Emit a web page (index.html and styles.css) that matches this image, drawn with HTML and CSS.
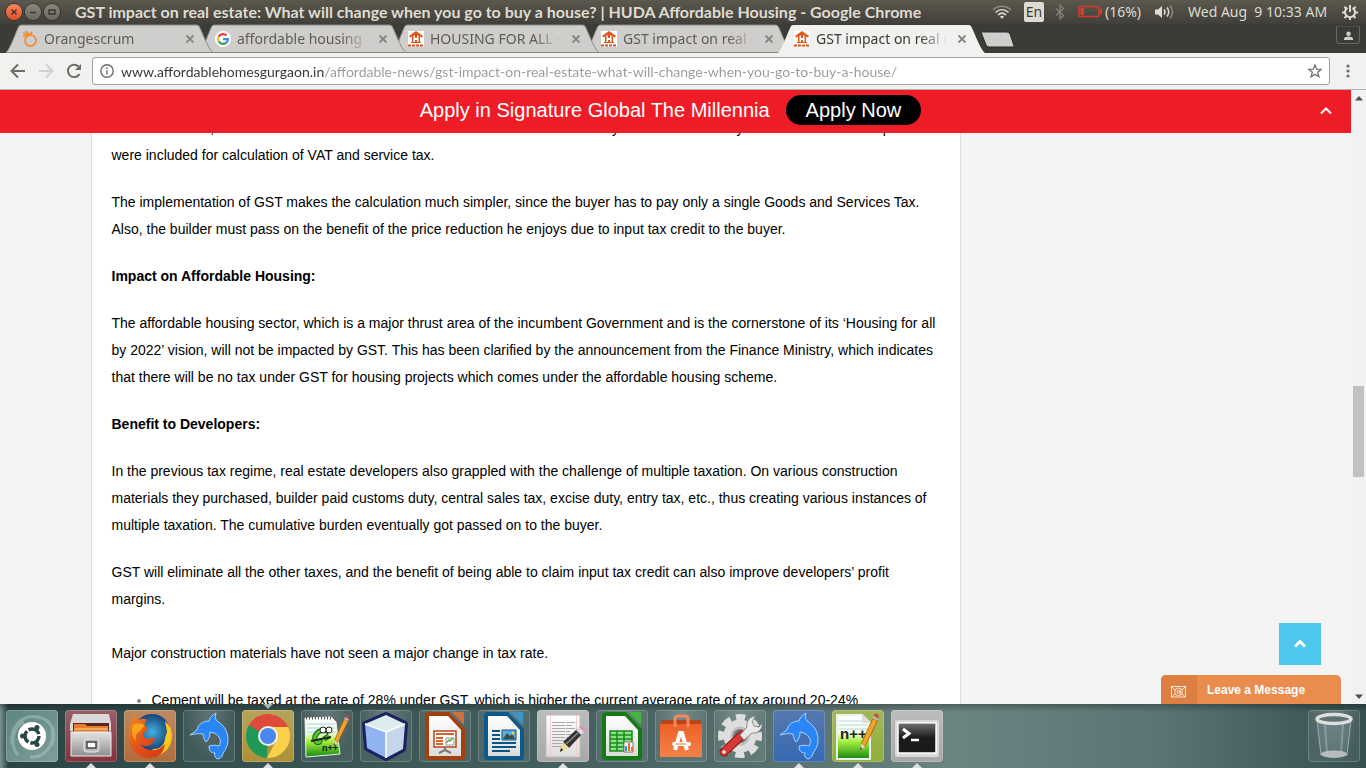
FILE: index.html
```html
<!DOCTYPE html>
<html lang="en">
<head>
<meta charset="utf-8">
<title>GST impact on real estate</title>
<link rel="stylesheet" href="styles.css">
</head>
<body>
<svg class="defs" aria-hidden="true">
  <defs>
    <linearGradient id="gloss" x1="0" y1="0" x2="0" y2="1"><stop offset="0" stop-color="#fff" stop-opacity=".35"/><stop offset="1" stop-color="#fff" stop-opacity="0"/></linearGradient>
    <linearGradient id="paper" x1="0" y1="0" x2="0" y2="1"><stop offset="0" stop-color="#fff"/><stop offset="1" stop-color="#dcdcdc"/></linearGradient>
    <linearGradient id="meadow" x1="0" y1="0" x2="0" y2="1"><stop offset="0" stop-color="#fff"/><stop offset=".4" stop-color="#f0ffe8"/><stop offset=".6" stop-color="#a8f040"/><stop offset="1" stop-color="#128a10"/></linearGradient>
    <linearGradient id="steel" x1="0" y1="0" x2="0" y2="1"><stop offset="0" stop-color="#e4e4e4"/><stop offset="1" stop-color="#8d8d8d"/></linearGradient>
    <linearGradient id="flame" x1="0" y1="0" x2="1" y2="1"><stop offset="0" stop-color="#f38b1d"/><stop offset=".5" stop-color="#e2501b"/><stop offset="1" stop-color="#d03a12"/></linearGradient>
    <linearGradient id="bag" x1="0" y1="0" x2="0" y2="1"><stop offset="0" stop-color="#ee6128"/><stop offset="1" stop-color="#f58249"/></linearGradient>
    <radialGradient id="globe"><stop offset="0" stop-color="#43b2e0"/><stop offset="1" stop-color="#164479"/></radialGradient>
    <symbol id="huda" viewBox="0 0 16 16"><path fill="#fff" d="M0 0h16v16H0z"/><path fill="#e0571c" d="M8 0l7 5-1 1.500-2-1V11h1v1H3v-1h1V5.500l-2 1L1 5zM5.500 4.500V11H7V9h2v2h1.500V4.500H9V7H7V4.500z"/><path stroke="#d8501c" stroke-width="2" stroke-dasharray="3 1" d="M0 14.500h16"/></symbol>
    <symbol id="close" viewBox="0 0 10 10"><path d="M1.500 1.500l7 7M8.500 1.500l-7 7" fill="none" stroke="currentColor" stroke-width="1.800"/></symbol>
    <symbol id="chevron" viewBox="0 0 14 10"><path d="M2 7.500l5-5 5 5" fill="none" stroke="currentColor"/></symbol>
    <symbol id="dolphin" viewBox="0 0 52 52"><path fill="#2a86f5" stroke="#a9d3ff" stroke-width="1" stroke-linejoin="round" d="M7 25c2-2 5-3 7-5 1-5 5-9 12-9 1-3 3-6 7-8-1 3-1 6 1 8 7 4 11 11 11 18 0 5-1 9-5 14 0 3-2 5-5 6-3-1-4-3-3-6-4 0-6-2-6-7 4-1 7-1 10 0 3-5 1-10-5-13l-4-1c0 4-1 7-4 10-2-2-2-5-3-8-4-1-9 0-13 1z"/></symbol>
    <symbol id="pencil" viewBox="0 0 24 44"><path fill="#f0a42c" stroke="#a8650b" d="M16 8l5 2L8 37l-4-3z"/><path fill="#ecd0a8" d="M4 34l4 3-5 5z"/><path fill="#333" d="M3 38l2 1-2 3z"/><path fill="#b8bcc0" d="M16 8l1-3 5 3-1 2z"/><path fill="#c94844" d="M17 5c0-3 6-4 5 3z"/></symbol>
  </defs>
</svg>

<header class="menubar">
  <div class="winbtns">
    <button class="winbtn winbtn-close" aria-label="Close"><svg viewBox="0 0 16 16"><path d="M5.500 5.500l5 5M10.500 5.500l-5 5"/></svg></button>
    <button class="winbtn" aria-label="Minimize"><svg viewBox="0 0 16 16"><path d="M5 8.500h6"/></svg></button>
    <button class="winbtn" aria-label="Restore"><svg viewBox="0 0 16 16"><path d="M5 6h6v4H5z"/></svg></button>
  </div>
  <h1 class="wintitle">GST impact on real estate: What will change when you go to buy a house? | HUDA Affordable Housing - Google Chrome</h1>
  <div class="status">
    <svg class="wifi" viewBox="0 0 20 16" fill="none" stroke-width="1.600"><path stroke="#8b8983" d="M1 6c5-5 13-5 18 0"/><path stroke="#dfdbd2" d="M3.500 8.500c4-3.700 9-3.700 13 0M6 11c2.500-2.300 5.500-2.300 8 0"/><path fill="#dfdbd2" d="M8 12.500c1.300-1 2.700-1 4 0l-2 2.500z"/></svg>
    <span class="lang">En</span>
    <svg class="bt" viewBox="0 0 10 16" fill="none" stroke="#85827a" stroke-width="1.300"><path d="M1 4.500l7.500 7L5 15V1l3.500 3.500L1 11.500"/></svg>
    <svg class="batt" viewBox="0 0 24 14"><rect x="1" y="1.500" width="20" height="10" rx="1" fill="none" stroke="#df382c" stroke-width="1.500"/><path fill="#df382c" d="M2.500 3h3.500v7H2.500zM22 4h2v5h-2z"/></svg>
    <span class="charge">(16%)</span>
    <svg class="vol" viewBox="0 0 20 16" fill="none" stroke-width="1.500"><path fill="#dfdbd2" d="M0 5.500h3L7 2v12l-4-3.500H0z"/><path stroke="#dfdbd2" d="M9 5.500q2 2.500 0 5M12 3.500q3.500 4.500 0 9"/><path stroke="#8b8983" d="M15 1.500q5 6.500 0 13"/></svg>
    <span class="clock">Wed Aug&nbsp; 9 10:33 AM</span>
    <svg class="gear" viewBox="0 0 16 16" fill="none" stroke="#dfdbd2"><path stroke-width="2" d="M5.500 3.800a5 5 0 1 0 5 0M8 1v7"/><path stroke-width="2" d="M2.300 2.800l2 2M13.700 2.800l-2 2M0 8.500h3M13 8.500h3M2.500 14l2-2M13.500 14l-2-2M8 13v3"/></svg>
  </div>
</header>

<nav class="tabstrip" aria-label="Tabs">
  <div class="tab t1">
    <svg class="tab-shape" viewBox="0 0 208 29" preserveAspectRatio="none"><path d="M0 28.500C3 27 9 11 12 4q1-3 3-3h176q2 0 3 3c4 9 9 22 13 24.500z"/></svg>
    <svg class="fav" viewBox="0 0 16 16" fill="none" stroke="#f58a2c" stroke-width="1.700"><circle cx="8.500" cy="9.500" r="5.500"/><path d="M1 2l4 1 3 2M4 0l3 4M1 5l5-1M8 4l2-3"/></svg>
    <button class="tab-title">Orangescrum</button><button class="tab-close" aria-label="Close tab"><svg><use href="#close"/></svg></button>
  </div>
  <div class="tab t2">
    <svg class="tab-shape" viewBox="0 0 208 29" preserveAspectRatio="none"><path d="M0 28.500C3 27 9 11 12 4q1-3 3-3h176q2 0 3 3c4 9 9 22 13 24.500z"/></svg>
    <svg class="fav" viewBox="0 0 16 16" fill="none" stroke-width="2.200"><circle cx="8" cy="8" r="8" fill="#fff"/><path stroke="#ea4335" d="M3.700 5.800a4.900 4.900 0 0 1 7.800-1.400"/><path stroke="#fbbc05" d="M3.700 10.300a4.900 4.900 0 0 1 0-4.500"/><path stroke="#34a853" d="M11.300 11.600a4.900 4.900 0 0 1-7.600-1.300"/><path stroke="#4285f4" d="M8 8.200h4.900q0 2.200-1.600 3.400"/></svg>
    <button class="tab-title">affordable housing</button><button class="tab-close" aria-label="Close tab"><svg><use href="#close"/></svg></button>
  </div>
  <div class="tab t3">
    <svg class="tab-shape" viewBox="0 0 208 29" preserveAspectRatio="none"><path d="M0 28.500C3 27 9 11 12 4q1-3 3-3h176q2 0 3 3c4 9 9 22 13 24.500z"/></svg>
    <svg class="fav"><use href="#huda"/></svg>
    <button class="tab-title">HOUSING FOR ALL -</button><button class="tab-close" aria-label="Close tab"><svg><use href="#close"/></svg></button>
  </div>
  <div class="tab t4">
    <svg class="tab-shape" viewBox="0 0 208 29" preserveAspectRatio="none"><path d="M0 28.500C3 27 9 11 12 4q1-3 3-3h176q2 0 3 3c4 9 9 22 13 24.500z"/></svg>
    <svg class="fav"><use href="#huda"/></svg>
    <button class="tab-title">GST impact on real e</button><button class="tab-close" aria-label="Close tab"><svg><use href="#close"/></svg></button>
  </div>
  <div class="tab active">
    <svg class="tab-shape" viewBox="0 0 208 29" preserveAspectRatio="none"><path d="M0 29C3 27 9 11 12 4q1-3 3-3h176q2 0 3 3c4 9 9 22 13 25z"/></svg>
    <svg class="fav"><use href="#huda"/></svg>
    <button class="tab-title">GST impact on real e</button><button class="tab-close" aria-label="Close tab"><svg><use href="#close"/></svg></button>
  </div>
  <button class="newtab" aria-label="New tab"><svg viewBox="0 0 34 17"><path d="M1 1h26q2 0 3 2l4 12q0 1-1 1H9q-2 0-3-2z"/></svg></button>
  <button class="profile" aria-label="Profile"><svg viewBox="0 0 10 10"><circle cx="5" cy="3" r="2.500"/><path d="M0 10V8q1-2 5-2t5 2v2z"/></svg></button>
</nav>

<div class="toolbar">
  <button class="tool" aria-label="Back"><svg viewBox="0 0 16 16"><path d="M15 8H2M8 1.500L1.500 8 8 14.500"/></svg></button>
  <button class="tool tool-off" aria-label="Forward" disabled><svg viewBox="0 0 16 16"><path d="M1 8h13M8 1.500L14.500 8 8 14.500"/></svg></button>
  <button class="tool" aria-label="Reload"><svg viewBox="0 0 16 16"><path d="M13.500 11A6.200 6.200 0 1 1 12.500 3.500"/><path class="solid" d="M15 1v6H9z"/></svg></button>
  <div class="omnibox">
    <svg class="info" viewBox="0 0 14 14"><circle cx="7" cy="7" r="6.200"/><path d="M7 6.200v4.300M7 3.300v1.700"/></svg>
    <input class="url" type="text" aria-label="Address" value="www.affordablehomesgurgaon.in/affordable-news/gst-impact-on-real-estate-what-will-change-when-you-go-to-buy-a-house/">
    <button class="star" aria-label="Bookmark"><svg viewBox="0 0 14 14"><path d="M7 1l1.700 4.200 4.500.2-3.500 2.900 1.200 4.500L7 10.300l-3.900 2.500 1.200-4.500L.8 5.400l4.500-.2z"/></svg></button>
  </div>
  <button class="more" aria-label="Menu"><svg viewBox="0 0 4 14"><circle cx="2" cy="2" r="1.600"/><circle cx="2" cy="7" r="1.600"/><circle cx="2" cy="12" r="1.600"/></svg></button>
</div>

<div class="viewport">
  <main class="page">
    <div class="banner">
      <span>Apply in Signature Global The Millennia</span>
      <a class="apply" href="#apply">Apply Now</a>
      <button class="collapse" aria-label="Collapse"><svg><use href="#chevron"/></svg></button>
    </div>
    <div class="container">
      <article class="article">
        <p>In certain states, however the value of the land is excluded and the tax is due only on the sum actually stated while in others parts<br>were included for calculation of VAT and service tax.</p>
        <p>The implementation of GST makes the calculation much simpler, since the buyer has to pay only a single Goods and Services Tax. Also, the builder must pass on the benefit of the price reduction he enjoys due to input tax credit to the buyer.</p>
        <h2>Impact on Affordable Housing:</h2>
        <p>The affordable housing sector, which is a major thrust area of the incumbent Government and is the cornerstone of its ‘Housing for all by 2022’ vision, will not be impacted by GST. This has been clarified by the announcement from the Finance Ministry, which indicates that there will be no tax under GST for housing projects which comes under the affordable housing scheme.</p>
        <h2>Benefit to Developers:</h2>
        <p>In the previous tax regime, real estate developers also grappled with the challenge of multiple taxation. On various construction materials they purchased, builder paid customs duty, central sales tax, excise duty, entry tax, etc., thus creating various instances of multiple taxation. The cumulative burden eventually got passed on to the buyer.</p>
        <p>GST will eliminate all the other taxes, and the benefit of being able to claim input tax credit can also improve developers’ profit margins.<br><br>Major construction materials have not seen a major change in tax rate.</p>
        <ul><li>Cement will be taxed at the rate of 28% under GST, which is higher the current average rate of tax around 20-24%</li></ul>
      </article>
    </div>
    <button class="totop" aria-label="Back to top"><svg><use href="#chevron"/></svg></button>
    <button class="chat">
      <span class="chat-icon"><svg viewBox="0 0 15 12" fill="none" stroke="#fff" stroke-width=".8"><path d="M.5.500h14v10.500H.5zM.5.500L4 4M14.500.500L11 4M.5 11L4 8M14.500 11L11 8"/><circle cx="7.500" cy="5.800" r="3.800"/><circle cx="7.500" cy="5.800" r="1.500"/><path d="M9 4v3l2 .5"/></svg></span>
      <span class="chat-text">Leave a Message</span>
    </button>
  </main>
  <div class="scrollbar" aria-hidden="true">
    <svg viewBox="0 0 8 5"><path d="M4 0l4 4.500H0z"/></svg>
    <div class="thumb"></div>
    <svg viewBox="0 0 8 5"><path d="M0 .5h8L4 5z"/></svg>
  </div>
</div>

<footer class="dock">
  <button class="app dash" aria-label="Dash"><svg viewBox="0 0 52 52"><path fill="none" stroke="#c8dcda" stroke-opacity=".35" stroke-width="3" d="M6 34C4 16 16 4 32 7s18 18 14 28M46 20c4 16-9 28-22 27M12 45C4 36 5 18 18 12"/><circle cx="26" cy="26" r="14" fill="#fff"/><circle cx="26" cy="26" r="7" fill="none" stroke="#2c4645" stroke-width="3.500" stroke-dasharray="12.600 2"/><g fill="#2c4645"><circle cx="16.500" cy="26" r="2.500"/><circle cx="31" cy="17.500" r="2.500"/><circle cx="31" cy="34.500" r="2.500"/></g></svg></button>
  <button class="app files run" aria-label="Files"><svg viewBox="0 0 52 52"><path fill="#d9d9d9" d="M8 4h36l2 10v7H5v-7z"/><path fill="#5a2720" d="M8 13h36v9H8z"/><path fill="#e57e2c" d="M9 14h11l2 2h21v7H9z"/><path stroke="#ffd29a" d="M9 19h34"/><path fill="url(#steel)" stroke="#ededed" d="M6 22h40v24H6z"/><rect x="19" y="29" width="15" height="13" rx="3" fill="#b9b9b9" stroke="#e6e6e6"/><rect x="22" y="32" width="9" height="6" fill="#fff" stroke="#444" stroke-width="1.500"/></svg></button>
  <button class="app firefox run" aria-label="Firefox"><svg viewBox="0 0 52 52"><circle cx="28" cy="22" r="18" fill="url(#globe)"/><path fill="#fcc81e" d="M41 11c7 6 9 15 5 24-4 8-12 12-20 12l3-8c8 0 12-5 12-11l2-6z"/><path fill="url(#flame)" d="M8 12c0-4 1-6 3-8 0 4 2 5 4 6 3-2 6-1 8 0-2 2-2 4-3 6l4 2c0 2-2 4-5 5 0 6 5 7 9 5 3-1 4 1 2 3-4 6-10 7-14 2 5 9 17 10 25 1-1 9-7 14-16 14C13 48 2 38 5 21c0-4 1-7 3-9z"/><path fill="#f9a51a" d="M9 15c4-2 9-2 12 1-4 2-3 4-5 5-4 2-5 6-4 10-4-4-5-10-3-16z"/></svg></button>
  <button class="app" aria-label="MySQL Workbench"><svg><use href="#dolphin"/></svg></button>
  <button class="app chrome run topmark" aria-label="Chrome"><svg viewBox="0 0 52 52"><path fill="#df4a3c" d="M26 26L7 15a22 22 0 0 1 39 2z"/><path fill="#209957" d="M26 26l-1 22A22 22 0 0 1 7 15z"/><path fill="#fdd04c" d="M26 17h20a22 22 0 0 1-21 31l9-17z"/><path fill="#df4a3c" d="M7 15a22 22 0 0 1 39 2H26l-8 5z"/><circle cx="26" cy="26" r="10" fill="#f2f2f2"/><circle cx="26" cy="26" r="8" fill="#4a87ee"/></svg></button>
  <button class="app" aria-label="Notepadqq"><svg viewBox="0 0 52 52"><path fill="url(#meadow)" stroke="#eee" d="M4 8l26-1 5 5 4 32-34 3z"/><path stroke="#a8cde8" d="M6 14h28M6 18h28M6 22h30"/><path stroke="#555" stroke-width="3" stroke-dasharray="1 2" d="M5 8h25"/><path fill="none" stroke="#165f12" stroke-width="5" d="M28 22c-12-5-15 5-14 8s6 4 5-1M23 29l5-3"/><path fill="none" stroke="#56c632" stroke-width="3" d="M28 22c-12-5-15 5-14 8s6 4 5-1M23 29l5-3"/><circle cx="22" cy="20" r="3" fill="#fff" stroke="#222"/><circle cx="28" cy="20" r="3" fill="#fff" stroke="#222"/><path stroke="#222" stroke-width="2" d="M10 31l20-4"/><text class="npp-small" x="21" y="41">n++</text><use href="#pencil" x="30" y="3" width="20" height="35"/></svg></button>
  <button class="app" aria-label="NetBeans"><svg viewBox="0 0 52 52"><path fill="#1c2260" stroke="#1c2260" stroke-width="6" stroke-linejoin="round" d="M26 5l19 9-2 25-17 9L7 38 5 14z"/><path fill="#d9edec" d="M26 5l19 9-19 8L5 14z"/><path fill="#8fb4f1" d="M5 14l21 8v26L7 38z"/><path fill="#c4d6e8" d="M45 14l-19 8v26l17-9z"/><path fill="none" stroke="#fff" stroke-width="1.500" d="M5 14l21 8 19-8M26 22v26"/></svg></button>
  <button class="app impress" aria-label="Impress"><svg viewBox="0 0 52 52"><path class="lo" d="M10 2h20l16 17v28q0 3-3 3H10q-4 0-4-4V6q0-4 4-4z"/><path class="lo-corner" d="M33 2h12v13z"/><path fill="url(#paper)" d="M10 6h19l13 14v26H10z"/><path fill="#fff" stroke="#b7471f" stroke-width="1.500" d="M15 21h22v16H15z"/><path fill="none" stroke="#d8622c" stroke-width="2" d="M17 24h18M17 28h7M17 31h7M17 34h7"/><path fill="none" stroke="#777" stroke-width="2" d="M26 37v3l-6 3M26 40l6 3"/><path fill="none" stroke="#4caf3b" stroke-width="1.500" d="M27 33l3-3 1 1 3-3"/><path fill="none" stroke="#999" d="M27 28h8v7h-8z"/></svg></button>
  <button class="app writer" aria-label="Writer"><svg viewBox="0 0 52 52"><path class="lo" d="M10 2h20l16 17v28q0 3-3 3H10q-4 0-4-4V6q0-4 4-4z"/><path class="lo-corner" d="M33 2h12v13z"/><path fill="url(#paper)" d="M10 6h19l13 14v26H10z"/><path stroke="#085688" stroke-width="2" d="M14 21h8M14 25h8M14 29h8M14 33h24M14 37h24M14 41h18"/><path fill="#5daadd" stroke="#085688" d="M24 20h14v10H24z"/><path fill="#3b4b45" d="M25 29l4-6 3 3 2-2 3 5z"/><circle cx="35" cy="23" r="1.500" fill="#ffc83d"/></svg></button>
  <button class="app gedit run" aria-label="Text Editor"><svg viewBox="0 0 52 52"><path fill="url(#paper)" stroke="#bbb" d="M9 5h34v42H9z"/><path stroke="#aaa" stroke-dasharray="13 1 9 2" d="M15 12.500h24M15 15.500h20M15 18.500h23M15 21.500h18M15 24.500h22M15 27.500h24M15 30.500h16M15 33.500h18M15 36.500h14"/><path stroke="#f3cccc" d="M13.500 5v42M39.500 5v42"/><path fill="#333" d="M26 32l14-13 5 5-13 14z"/><path fill="#f1dc98" d="M26 32l6 6-9 4z"/><path fill="#111" d="M24 38l2 2-3 2z"/><path fill="#ddd" d="M39 20l3-3 5 5-3 3z"/><path fill="#dc8fc0" d="M42 17q3-2 5 1t0 4z"/><path stroke="#888" stroke-width="1.500" d="M29 34l13-12"/></svg></button>
  <button class="app calc" aria-label="Calc"><svg viewBox="0 0 52 52"><path class="lo" d="M10 2h20l16 17v28q0 3-3 3H10q-4 0-4-4V6q0-4 4-4z"/><path class="lo-corner" d="M33 2h12v13z"/><path fill="url(#paper)" d="M10 6h19l13 14v26H10z"/><path fill="#8ee08c" stroke="#188b17" stroke-width="1.500" d="M14 21h22v20H14zM14 25h22M14 29h22M14 33h22M14 37h22M21 21v20M28 21v20"/><path fill="#fff" stroke="#777" d="M28 32h9v10h-9z"/><path stroke="#1a9bdf" stroke-width="2" d="M30 41v-5"/><path stroke="#ef6a24" stroke-width="2" d="M33 41v-8M36 41v-4"/></svg></button>
  <button class="app" aria-label="Ubuntu Software"><svg viewBox="0 0 52 52"><path fill="#b9451d" d="M7 10h38l2 5H5z"/><path fill="url(#bag)" d="M5 14h42v33H5z"/><path fill="none" stroke="#f08a64" stroke-width="3" d="M20 17V9q0-3 3-3h7q3 0 3 3v8"/><path fill="none" stroke="#fff" stroke-width="4" d="M20 40l5-17h2l5 17"/><path stroke="#fff" stroke-width="4" stroke-linecap="round" d="M19 34h15"/><path stroke="#f07030" d="M21 34h10"/></svg></button>
  <button class="app" aria-label="System Settings"><svg viewBox="0 0 52 52"><circle cx="26" cy="26" r="18.500" fill="none" stroke="#dedede" stroke-width="7" stroke-dasharray="9 5.530" stroke-dashoffset="4.500"/><circle cx="26" cy="26" r="13" fill="#bdbdbd" stroke="#dedede" stroke-width="7"/><circle cx="26" cy="26" r="7" fill="#777"/><path stroke="#7d1512" stroke-width="9" stroke-linecap="round" d="M10 42l18-17"/><path stroke="#d83934" stroke-width="7" stroke-linecap="round" d="M10 42l18-17"/><path fill="#e9e9e9" stroke="#777" stroke-width=".8" d="M26 25l7-8c-1-6 3-11 9-11l-4 5 2 5 5 1 3-4c1 6-4 11-10 10l-8 7z"/><circle cx="10" cy="42" r="1.800" fill="#eee"/></svg></button>
  <button class="app blue run" aria-label="MySQL Workbench window"><svg><use href="#dolphin"/></svg></button>
  <button class="app green run" aria-label="Notepadqq window"><svg viewBox="0 0 52 52"><path fill="url(#meadow)" stroke="#eee" stroke-width="2" d="M5 5h25l8 8v36H5z"/><path stroke="#bbd4e0" d="M7 11h23M7 15h29M7 19h29"/><path fill="#ddd" d="M30 4v9h8z"/><text class="npp" x="8" y="29">n++</text><use href="#pencil" x="25" y="1" width="24" height="42"/></svg></button>
  <button class="app grey run" aria-label="Terminal"><svg viewBox="0 0 52 52"><rect x="4" y="10" width="44" height="37" rx="2" fill="#d9d9d9"/><path fill="#1b1b1b" stroke="#fff" stroke-width="1.500" d="M7 13h38v30H7z"/><path fill="url(#gloss)" d="M8 14h36v14H8z"/><path fill="none" stroke="#fff" stroke-width="3" d="M12 19l6 4.500-6 4.500"/><path stroke="#fff" stroke-width="2.500" d="M20 30h8"/></svg></button>
  <button class="app trash" aria-label="Trash"><svg viewBox="0 0 52 52"><path fill="#bcd" fill-opacity=".16" stroke="#9cadad" stroke-width="1" d="M9 10l4 35q13 5 26 0l4-35z"/><ellipse cx="26" cy="44" rx="13" ry="3.500" fill="#ccc" fill-opacity=".8"/><ellipse cx="26" cy="9" rx="17" ry="4.500" fill="#5d7271" stroke="#dedede" stroke-width="3.500"/><path stroke="#c8d4d4" stroke-opacity=".35" stroke-width="2" d="M17 14l2 29M35 14l-2 29"/></svg></button>
</footer>
</body>
</html>
```
FILE: styles.css
```css
* { box-sizing: border-box; }
html, body { height: 100%; }
body {
  margin: 0;
  display: flex;
  flex-direction: column;
  overflow: hidden;
  font-family: "Liberation Sans", Arial, sans-serif;
}
button { border: 0; padding: 0; margin: 0; background: none; font: inherit; color: inherit; }
svg { display: block; flex: none; }
.defs { position: absolute; width: 0; height: 0; }

/* desktop menu bar */
.menubar {
  flex: none;
  height: 24px;
  display: flex;
  align-items: center;
  padding: 0 8px 0 6px;
  background: linear-gradient(#5b584d, #403f3a);
  color: #dfdbd2;
  font-family: "Noto Sans", sans-serif;
  font-size: 14px;
  white-space: nowrap;
}
.winbtns { display: flex; gap: 3px; margin-right: 15px; }
.winbtn {
  width: 16px;
  height: 16px;
  border-radius: 50%;
  background: linear-gradient(#8a877e, #6b6861);
  box-shadow: 0 0 0 1px #35342f;
}
.winbtn svg { width: 16px; height: 16px; fill: none; stroke: #35342f; stroke-width: 1.3; }
.winbtn-close { background: linear-gradient(#f58562, #e3501f); }
.wintitle { margin: 0; flex: 1; font-family: Lato, sans-serif; font-size: 16px; font-weight: 700; line-height: 24px; }
.status { display: flex; align-items: center; line-height: 24px; }
.wifi { width: 20px; height: 16px; margin-right: 12px; }
.lang {
  width: 20px;
  height: 20px;
  margin-right: 11px;
  border-radius: 2px;
  background: #dfdbd2;
  color: #3c3b37;
  line-height: 20px;
  text-align: center;
}
.bt { width: 10px; height: 16px; margin-right: 13px; }
.batt { width: 24px; height: 14px; margin-right: 3px; }
.charge { width: 50px; }
.vol { width: 20px; height: 16px; margin-right: 13px; }
.clock { width: 154px; }
.gear { width: 16px; height: 16px; }

/* tab strip */
.tabstrip {
  flex: none;
  height: 29px;
  display: flex;
  padding: 0 6px;
  background: #3c3b37;
}
.tab {
  position: relative;
  flex: 0 1 208px;
  min-width: 0;
  display: flex;
  align-items: center;
  margin-right: -15px;
  padding: 0 19px 0 16px;
  color: #5e5c58;
}
.t1 { z-index: 4; }
.t2 { z-index: 3; }
.t3 { z-index: 2; }
.t4 { z-index: 1; }
.active { z-index: 5; color: #3b3a37; }
.tab-shape { position: absolute; inset: 0; width: 100%; height: 100%; fill: #d0cecc; stroke: #8d8b88; stroke-width: 1; }
.active .tab-shape { fill: #f2f1f0; stroke: none; }
.fav { position: relative; width: 16px; height: 16px; margin-right: 6px; }
.tab-title {
  position: relative;
  flex: 1;
  min-width: 0;
  overflow: hidden;
  text-align: left;
  white-space: nowrap;
  font-family: "Noto Sans", sans-serif;
  font-size: 14px;
  line-height: 24px;
  -webkit-mask-image: linear-gradient(to right, #000 80%, transparent);
  mask-image: linear-gradient(to right, #000 80%, transparent);
}
.tab-close { position: relative; margin-left: 10px; color: #888683; }
.tab-close svg { width: 10px; height: 10px; }
.newtab { margin: 2px auto 0 9px; align-self: center; }
.newtab svg { width: 34px; height: 17px; fill: #d0cecc; stroke: #2e2d2a; }
.profile {
  width: 24px;
  height: 18px;
  margin-top: 2px;
  border: 1px solid #696762;
  border-top-color: #4d4b47;
  border-radius: 0 0 4px 4px;
  display: flex;
  align-items: center;
  justify-content: center;
}
.profile svg { width: 9px; height: 9px; fill: #cfcdc8; }

/* toolbar */
.toolbar {
  flex: none;
  height: 37px;
  display: flex;
  align-items: center;
  gap: 12px;
  padding: 0 16px 0 10px;
  background: #f2f1f0;
  border-bottom: 1px solid #b3b1ae;
}
.tool svg { width: 16px; height: 16px; fill: none; stroke: #6f6d6a; stroke-width: 2; }
.tool .solid { fill: #6f6d6a; stroke: none; }
.tool-off svg { stroke: #d3d1cf; }
.omnibox {
  flex: 1;
  height: 28px;
  display: flex;
  align-items: center;
  margin: 0 4px 0 -2px;
  padding: 0 7px;
  background: #fff;
  border: 1px solid #a3a19f;
  border-radius: 3px;
}
.info { width: 14px; height: 14px; fill: none; stroke: #6f6d6a; stroke-width: 1.4; }
.url {
  flex: 1;
  min-width: 0;
  height: 24px;
  margin-left: 7px;
  padding: 0;
  border: 0;
  outline: 0;
  font-family: Lato, sans-serif;
  font-size: 14px;
  color: transparent;
  background: linear-gradient(to right, #333 203px, #999 203px);
  -webkit-background-clip: text;
  background-clip: text;
}
.star svg { width: 14px; height: 14px; fill: none; stroke: #6f6d6a; stroke-width: 1.3; }
.more svg { width: 4px; height: 14px; fill: #6f6d6a; }

/* web page */
.viewport { flex: 1; min-height: 0; display: flex; }
.page { position: relative; flex: 1; min-width: 0; overflow: hidden; background: #f4f4f4; }
.banner {
  position: absolute;
  inset: 0 0 auto;
  display: flex;
  justify-content: center;
  align-items: center;
  gap: 16px;
  padding: 5px 10px 8px 0;
  background: #ee1c27;
  color: #fff;
  font-size: 20px;
  line-height: 30px;
}
.apply { padding: 0 20px; border-radius: 15px; background: #000; color: #fff; text-decoration: none; }
.collapse { position: absolute; right: 18px; top: 16px; }
.collapse svg, .totop svg { width: 14px; height: 10px; }
.collapse svg { stroke-width: 2; }
.totop svg { stroke-width: 3; }
.container { max-width: 1170px; margin: 0 auto; }
.article {
  max-width: 870px;
  padding: 25px 20px 0;
  background: #fff;
  border: 1px solid #ddd;
  border-width: 0 1px;
  color: #000;
  font-size: 14px;
  line-height: 27px;
}
.article p, .article h2, .article ul { margin: 0 0 20px; font-size: 14px; }
.article ul { padding-left: 40px; }
.article li::marker { color: #888; }
.totop {
  position: absolute;
  right: 30px;
  bottom: 39px;
  width: 42px;
  height: 42px;
  display: flex;
  align-items: center;
  justify-content: center;
  background: #4fc6ed;
  color: #fff;
}
.chat {
  position: absolute;
  right: 10px;
  bottom: 0;
  width: 180px;
  height: 29px;
  display: flex;
  overflow: hidden;
  border-radius: 5px 5px 0 0;
  background: #eb8c4f;
  color: #fff;
  font-size: 12px;
  font-weight: 700;
  line-height: 30px;
}
.chat-icon { width: 36px; height: 29px; padding: 11px 0 0 10px; margin-right: 10px; background: #dd7e42; }
.chat-icon svg { width: 15px; height: 12px; }
.scrollbar {
  width: 15px;
  display: flex;
  flex-direction: column;
  align-items: center;
  padding: 6px 0 5px;
  background: #f1f1f1;
}
.scrollbar svg { width: 8px; height: 5px; fill: #505050; }
.thumb { width: 11px; height: 91px; margin: 285px 0 auto; background: #c1c1c1; }

/* launcher */
.dock {
  flex: none;
  height: 64px;
  display: flex;
  gap: 7px;
  padding: 6px;
  background: linear-gradient(#0004, #0000 8px), linear-gradient(to right, #7d9492 0, #2b4445 8px, #375050 20%, #486261 45%, #6b8381 70%, #5b7473 85%, #36504f);
}
.app {
  position: relative;
  width: 52px;
  height: 52px;
  border-radius: 4px;
  background: radial-gradient(ellipse at 50% 0, #ffffff38, #ffffff12 70%);
  box-shadow: inset 0 0 0 1px #ffffff30;
}
.app > svg { width: 52px; height: 52px; }
.dash { background: linear-gradient(135deg, #5c8583, #809e9b); }
.files { background: linear-gradient(#98606a, #83323b); }
.firefox { background: linear-gradient(#bc8963, #b06d3c); }
.chrome { background: linear-gradient(#b7a35b, #ac9137); }
.gedit, .grey { background: linear-gradient(#bcbcbc, #a8a8a8); }
.blue { background: linear-gradient(#5579ae, #3668b1); }
.green { background: linear-gradient(#a3b75b, #8fb03b); }
.trash { margin-left: auto; }
.run::after, .topmark::before {
  content: "";
  position: absolute;
  left: 21px;
  border: 5px solid transparent;
}
.run::after { bottom: -6px; border-top: 0; border-bottom-color: #dfdfdf; }
.topmark::before { top: -6px; border-bottom: 0; border-top-color: #a8b0b0; }
.lo { fill: #a2400e; }
.lo-corner { fill: #cf713d; }
.writer .lo { fill: #0c5a8c; }
.writer .lo-corner { fill: #3d94c6; }
.calc .lo { fill: #147a12; }
.calc .lo-corner { fill: #43b53c; }
.npp { font: 700 15px "Liberation Sans", sans-serif; fill: #222; }
.npp-small { font: 700 9px "Liberation Sans", sans-serif; fill: #111; }
```
